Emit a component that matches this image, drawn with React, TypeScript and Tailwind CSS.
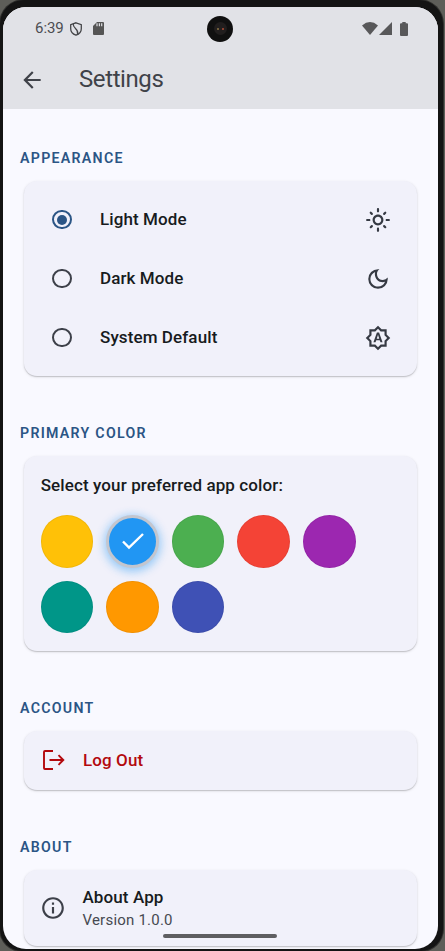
import type { ReactNode } from "react";
import { MdOutlineBrightnessAuto, MdOutlineDarkMode, MdOutlineInfo, MdOutlineLightMode, MdArrowBack } from "react-icons/md";

function SectionTitle({ children }: { children: ReactNode }) {
  return <h2 className="ml-[17px] h-[18px] text-[14.2px] leading-[18px] font-semibold tracking-[1.28px] text-[#2b5585]">{children}</h2>;
}

function Card({ className, children }: { className: string; children: ReactNode }) {
  return (
    <div className={`ml-[20.5px] w-[393px] rounded-[13px] bg-[#f1f1fa] shadow-[0_1px_1px_rgba(0,0,0,0.14),0_1px_3px_rgba(0,0,0,0.13)] ${className}`}>
      {children}
    </div>
  );
}

function ModeRow({ label, selected, icon }: { label: string; selected?: boolean; icon: ReactNode }) {
  return (
    <div className="flex h-[59px] items-center pr-[25.5px] pl-[28.5px] text-[#363a43]">
      <span className={`flex size-[19.5px] items-center justify-center rounded-full border-2 ${selected ? "border-[#2b5585]" : "border-[#3d4049]"}`}>
        {selected && <span className="size-[10px] rounded-full bg-[#2b5585]" />}
      </span>
      <span className="ml-[28.5px] flex-1 text-[17px] font-medium tracking-[0.1px] text-[#171b20]">{label}</span>
      {icon}
    </div>
  );
}

const swatches = ["bg-[#ffc107]", "bg-[#2196f3]", "bg-[#4caf50]", "bg-[#f44336]", "bg-[#9c27b0]", "bg-[#009688]", "bg-[#ff9800]", "bg-[#3f51b5]"];

export default function App() {
  return (
    <div className="relative h-[951px] w-[445px] overflow-hidden bg-[#5e5e59] font-['Roboto','Liberation_Sans',sans-serif]">
      <div className="h-[951px] w-[443px] rounded-t-[24px] rounded-b-[22px] bg-[#141414] pt-[7px] pl-[3px] shadow-[0_0_0_1px_#30302e]">
        <div className="h-[942px] w-[435px] overflow-hidden rounded-[23px] bg-[#f9f9ff]">
          <header className="h-[102px] bg-[#e1e2e7]">
            <div className="flex h-[43px] items-center pl-[32px] text-[#4c4d52]">
              <span className="w-[29px] text-[15px] tracking-[-0.05px]">6:39</span>
              <svg viewBox="0 0 12 14" className="ml-[6px] h-[14px] w-[12px] fill-none stroke-[#454649]" strokeWidth="1.3">
                <path d="M6 .8 11.3 2.7v4c0 3-2.2 5.4-5.3 6.5C2.900 12.100.7 9.700.7 6.700v-4z" />
                <path d="M3.300 1.900c-.8 5.100 5.700 4.300 4.300 10.200" />
              </svg>
              <svg viewBox="0 0 11 13" className="ml-[11px] h-[13px] w-[11px]">
                <path d="M4 0h6q1 0 1 1v11q0 1-1 1H1q-1 0-1-1V4z" fill="#555" />
                <path d="M4 1.300v3M6.400 1.300v3M8.700 1.300v3" stroke="#e1e2e7" strokeWidth="1.200" />
              </svg>
              <div className="ml-[103px] flex size-[26px] items-center justify-center rounded-full bg-[#101010]">
                <div className="flex size-[13px] items-center justify-center gap-[3px] rounded-full bg-[#211e1e]">
                  <span className="size-[2px] rounded-full bg-[#8b7445]" />
                  <span className="size-[2px] rounded-full bg-[#b04c36]" />
                </div>
              </div>
              <svg viewBox="0 0 16 13" className="ml-[128.5px] h-[13px] w-[16px]"><path d="M0 3.400Q8-3.400 16 3.400L8 13z" fill="#58585a" /></svg>
              <svg viewBox="0 0 13 13" className="ml-[1.5px] h-[13px] w-[13px]"><path d="M13 0v13H0z" fill="#58585a" /></svg>
              <svg viewBox="0 0 8 14" className="ml-[7.5px] h-[14px] w-[8px]"><path d="M2.300 0h3.400v1.300H7q1 0 1 1V13q0 1-1 1H1q-1 0-1-1V2.300q0-1 1-1h1.300z" fill="#58585a" /></svg>
            </div>
            <div className="flex h-[59px] items-center pl-[16px] text-[#3f4249]">
              <MdArrowBack className="size-[26px]" />
              <h1 className="-mt-[1px] ml-[34px] text-[24px] font-normal tracking-[-0.4px]">Settings</h1>
            </div>
          </header>

          <main className="pt-[40px]">
            <SectionTitle>APPEARANCE</SectionTitle>
            <Card className="mt-[14px] h-[195px] pt-[9px]">
              <ModeRow label="Light Mode" selected icon={<MdOutlineLightMode className="size-[26px]" />} />
              <ModeRow label="Dark Mode" icon={<MdOutlineDarkMode className="size-[26px]" />} />
              <ModeRow label="System Default" icon={<MdOutlineBrightnessAuto className="size-[26px]" />} />
            </Card>

            <div className="h-[48px]" />
            <SectionTitle>PRIMARY COLOR</SectionTitle>
            <Card className="mt-[14px] h-[195px] pt-[17px] pl-[17.2px]">
              <p className="text-[17px] leading-[24px] font-medium tracking-[0.11px] text-[#171b20]">Select your preferred app color:</p>
              <div className="mt-[18px] flex w-[340px] flex-wrap gap-[13px]">
                {swatches.map((color, index) => (
                  <div key={color} className={`flex size-[52.6px] items-center justify-center rounded-full ${color} ${index === 1 ? "border-[3px] border-[#c3c6cf] shadow-[0_2px_9px_2px_rgba(33,150,243,0.42)]" : "border border-black/5"}`}>
                    {index === 1 && (
                      <svg viewBox="0 0 24 18" className="h-[18px] w-[24px] fill-none stroke-white" strokeWidth="2.4"><path d="m2 9.500 6 6L22 2" /></svg>
                    )}
                  </div>
                ))}
              </div>
            </Card>

            <div className="h-[48px]" />
            <SectionTitle>ACCOUNT</SectionTitle>
            <Card className="mt-[13.5px] flex h-[59.5px] items-center pl-[17.5px] text-[#b3090d]">
              <svg viewBox="0 0 26 26" className="size-[26px] fill-none stroke-current" strokeWidth="1.9">
                <path d="M12 4H4q-1 0-1 1v16q0 1 1 1h8" />
                <path d="M8.500 13H22M17.500 8.200l4.800 4.800-4.800 4.800" />
              </svg>
              <span className="ml-[16px] text-[17px] font-medium tracking-[0.1px]">Log Out</span>
            </Card>

            <div className="h-[48px]" />
            <SectionTitle>ABOUT</SectionTitle>
            <Card className="mt-[14px] flex h-[76px] items-center pl-[16.5px]">
              <MdOutlineInfo className="size-[26px] text-[#3d4049]" />
              <div className="ml-[16.5px] pt-[1px]">
                <p className="text-[17px] leading-[24px] font-medium tracking-[0.1px] text-[#171b20]">About App</p>
                <p className="text-[15px] leading-[23px] font-normal tracking-[0.22px] text-[#464951]">Version 1.0.0</p>
              </div>
            </Card>
          </main>
        </div>
      </div>
      <div className="absolute top-[934px] left-[163px] h-[4px] w-[114px] rounded-full bg-[#5e5e61]" />
    </div>
  );
}
